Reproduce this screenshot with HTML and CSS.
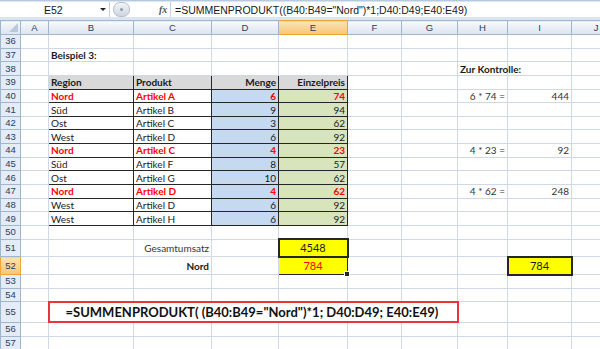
FILE: index.html
```html
<!DOCTYPE html>
<html lang="de">
<head>
  <meta charset="UTF-8" />
  <meta name="viewport" content="width=device-width, initial-scale=1.0"/>
  <title>SUMMENPRODUKT Beispiel 3</title>
  <link rel="stylesheet" href="styles.css">
</head>
<body>
  <div class="formula-bar">
    <div class="name-box">
      <span class="cell-ref">E52</span>
      <span class="drop-arrow"></span>
    </div>
    <div class="bar-tools">
      <span class="grip"><span class="grip-dot"></span></span>
      <span class="fx">fx</span>
    </div>
    <div class="formula-input">=SUMMENPRODUKT((B40:B49="Nord")*1;D40:D49;E40:E49)</div>
  </div>

  <table class="sheet">
    <colgroup>
      <col class="c-rh"><col class="c-a"><col class="c-b"><col class="c-c"><col class="c-d">
      <col class="c-e"><col class="c-f"><col class="c-g"><col class="c-h"><col class="c-i"><col class="c-j">
    </colgroup>
    <tr class="head-row">
      <th class="corner"><span class="corner-tri"></span></th>
      <th>A</th><th>B</th><th>C</th><th>D</th><th class="active">E</th><th>F</th><th>G</th><th>H</th><th>I</th><th>J</th>
    </tr>
    <tr><th>36</th><td></td><td></td><td></td><td></td><td></td><td></td><td></td><td></td><td></td><td></td></tr>
    <tr><th>37</th><td></td><td class="bold">Beispiel 3:</td><td></td><td></td><td></td><td></td><td></td><td></td><td></td><td></td></tr>
    <tr><th>38</th><td></td><td></td><td></td><td></td><td></td><td></td><td></td><td class="bold">Zur Kontrolle:</td><td></td><td></td></tr>
    <tr><th>39</th><td></td><td class="tb th-cell">Region</td><td class="tb th-cell">Produkt</td><td class="tb th-cell num">Menge</td><td class="tb th-cell num">Einzelpreis</td><td></td><td></td><td></td><td></td><td></td></tr>
    <tr class="nord"><th>40</th><td></td><td class="tb">Nord</td><td class="tb">Artikel A</td><td class="tb qty num">6</td><td class="tb price num">74</td><td></td><td></td><td class="num check">6 * 74 =</td><td class="num check">444</td><td></td></tr>
    <tr><th>41</th><td></td><td class="tb">Süd</td><td class="tb">Artikel B</td><td class="tb qty num">9</td><td class="tb price num">94</td><td></td><td></td><td></td><td></td><td></td></tr>
    <tr><th>42</th><td></td><td class="tb">Ost</td><td class="tb">Artikel C</td><td class="tb qty num">3</td><td class="tb price num">62</td><td></td><td></td><td></td><td></td><td></td></tr>
    <tr><th>43</th><td></td><td class="tb">West</td><td class="tb">Artikel D</td><td class="tb qty num">6</td><td class="tb price num">92</td><td></td><td></td><td></td><td></td><td></td></tr>
    <tr class="nord"><th>44</th><td></td><td class="tb">Nord</td><td class="tb">Artikel C</td><td class="tb qty num">4</td><td class="tb price num">23</td><td></td><td></td><td class="num check">4 * 23 =</td><td class="num check">92</td><td></td></tr>
    <tr><th>45</th><td></td><td class="tb">Süd</td><td class="tb">Artikel F</td><td class="tb qty num">8</td><td class="tb price num">57</td><td></td><td></td><td></td><td></td><td></td></tr>
    <tr><th>46</th><td></td><td class="tb">Ost</td><td class="tb">Artikel G</td><td class="tb qty num">10</td><td class="tb price num">62</td><td></td><td></td><td></td><td></td><td></td></tr>
    <tr class="nord"><th>47</th><td></td><td class="tb">Nord</td><td class="tb">Artikel D</td><td class="tb qty num">4</td><td class="tb price num">62</td><td></td><td></td><td class="num check">4 * 62 =</td><td class="num check">248</td><td></td></tr>
    <tr><th>48</th><td></td><td class="tb">West</td><td class="tb">Artikel D</td><td class="tb qty num">6</td><td class="tb price num">92</td><td></td><td></td><td></td><td></td><td></td></tr>
    <tr><th>49</th><td></td><td class="tb">West</td><td class="tb">Artikel H</td><td class="tb qty num">6</td><td class="tb price num">92</td><td></td><td></td><td></td><td></td><td></td></tr>
    <tr><th>50</th><td></td><td></td><td></td><td></td><td></td><td></td><td></td><td></td><td></td><td></td></tr>
    <tr class="r51"><th>51</th><td></td><td></td><td class="num label">Gesamtumsatz</td><td></td><td class="result">4548</td><td></td><td></td><td></td><td></td><td></td></tr>
    <tr class="r52"><th class="active">52</th><td></td><td></td><td class="num bold">Nord</td><td></td><td class="result selected red">784<span class="fill-handle"></span></td><td></td><td></td><td></td><td class="result">784</td><td></td></tr>
    <tr><th>53</th><td></td><td></td><td></td><td></td><td></td><td></td><td></td><td></td><td></td><td></td></tr>
    <tr><th>54</th><td></td><td></td><td></td><td></td><td></td><td></td><td></td><td></td><td></td><td></td></tr>
    <tr class="r55"><th>55</th><td></td><td colspan="6" class="formula-note">=SUMMENPRODUKT( (B40:B49="Nord")*1; D40:D49; E40:E49)</td><td></td><td></td><td></td></tr>
    <tr><th>56</th><td></td><td></td><td></td><td></td><td></td><td></td><td></td><td></td><td></td><td></td></tr>
    <tr><th>57</th><td></td><td></td><td></td><td></td><td></td><td></td><td></td><td></td><td></td><td></td></tr>
  </table>
</body>
</html>
```

FILE: styles.css
```css
body {
  margin: 0;
  width: 600px;
  height: 349px;
  overflow: hidden;
  background: #ffffff;
  font-family: Lato, "Liberation Sans", sans-serif;
  color: #1a1a1a;
}

/* formula bar */
.formula-bar {
  display: flex;
  height: 20px;
  box-sizing: border-box;
  padding: 1px 0 3px;
  background: #dbe5f1;
  border-top: 1px solid #b8c9de;
  font-family: "Liberation Sans", sans-serif;
}

.name-box {
  width: 109px;
  display: flex;
  align-items: center;
  background: #ffffff;
  border-right: 1px solid #c5d2e3;
  font-size: 10.5px;
}

.cell-ref {
  flex: 1;
  padding-left: 44px;
}

.drop-arrow {
  width: 0;
  height: 0;
  margin-right: 3px;
  border-left: 3px solid transparent;
  border-right: 3px solid transparent;
  border-top: 3px solid #222;
}

.bar-tools {
  width: 60px;
  display: flex;
  align-items: center;
  background: #ffffff;
}

.grip {
  width: 15px;
  height: 13px;
  margin-left: 3px;
  border-radius: 7px;
  background: linear-gradient(#f2f4f7, #cdd5df);
  border: 1px solid #b5c0cd;
  display: flex;
  align-items: center;
  justify-content: center;
}

.grip-dot {
  width: 3px;
  height: 3px;
  border-radius: 50%;
  background: #8e9aa8;
}

.fx {
  margin-left: 29px;
  font-family: "Liberation Serif", serif;
  font-style: italic;
  font-weight: bold;
  font-size: 10px;
  color: #555;
}

.formula-input {
  flex: 1;
  display: flex;
  align-items: center;
  padding-left: 4px;
  background: #ffffff;
  border-left: 1px solid #c5d2e3;
  font-size: 10.5px;
  white-space: nowrap;
}

/* sheet grid */
.sheet {
  border-collapse: collapse;
  table-layout: fixed;
  width: 620px;
  font-size: 10px;
}

.c-rh { width: 20px; }
.c-a { width: 28px; }
.c-b { width: 85px; }
.c-c { width: 78px; }
.c-d { width: 67px; }
.c-e { width: 69px; }
.c-f { width: 54px; }
.c-g { width: 56px; }
.c-h { width: 50px; }
.c-i { width: 64px; }
.c-j { width: 49px; }

.sheet tr {
  height: 13.65px;
}

.sheet .head-row {
  height: 14px;
}

.sheet .r51 { height: 17.5px; }
.sheet .r52 { height: 18px; }
.sheet .r55 { height: 20.5px; }

.sheet td {
  padding: 0 2px;
  border: 1px solid #d0d7e5;
  white-space: nowrap;
  overflow: visible;
  line-height: 10px;
}

.sheet th {
  padding: 0;
  border: 1px solid #9eb6ce;
  background: #e4ecf7;
  font-family: "Liberation Sans", sans-serif;
  font-weight: normal;
  font-size: 9.5px;
  color: #27415f;
  line-height: 10px;
}

.head-row th {
  background: linear-gradient(#f7f9fc, #dbe4f0);
  color: #27415f;
}

.sheet th.active {
  background: linear-gradient(#fbe3b4, #f6c574);
  border-color: #f2a436;
}

.corner {
  position: relative;
}

.corner-tri {
  position: absolute;
  right: 2px;
  bottom: 2px;
  width: 0;
  height: 0;
  border-left: 9px solid transparent;
  border-bottom: 9px solid #b9c8da;
}

.bold {
  font-weight: bold;
}

.num {
  text-align: right;
}

.sheet .tb {
  border-color: #262626;
}

.th-cell {
  background: #d9d9d9;
  font-weight: bold;
}

.qty {
  background: #c5d9f1;
}

.price {
  background: #d8e4bc;
}

.nord .tb {
  color: #ff0000;
  font-weight: bold;
}

.check {
  color: #333;
}

.label {
  color: #333;
}

.sheet .result {
  background: #ffff00;
  border: 2px solid #262626;
  text-align: center;
  font-size: 11px;
}

.sheet .selected {
  position: relative;
  border-top-width: 1px;
  border-left: 1px solid #2a4bb4;
  border-right: 1px solid #262626;
  border-bottom: 1px solid #262626;
}

.red {
  color: #ff0000;
}

.fill-handle {
  position: absolute;
  right: -3px;
  bottom: -3px;
  width: 4px;
  height: 4px;
  background: #262626;
  border: 1px solid #ffffff;
}

.sheet .formula-note {
  border: 2px solid #e8343a;
  padding-left: 16px;
  font-size: 13px;
  font-weight: bold;
  color: #111;
}
```
